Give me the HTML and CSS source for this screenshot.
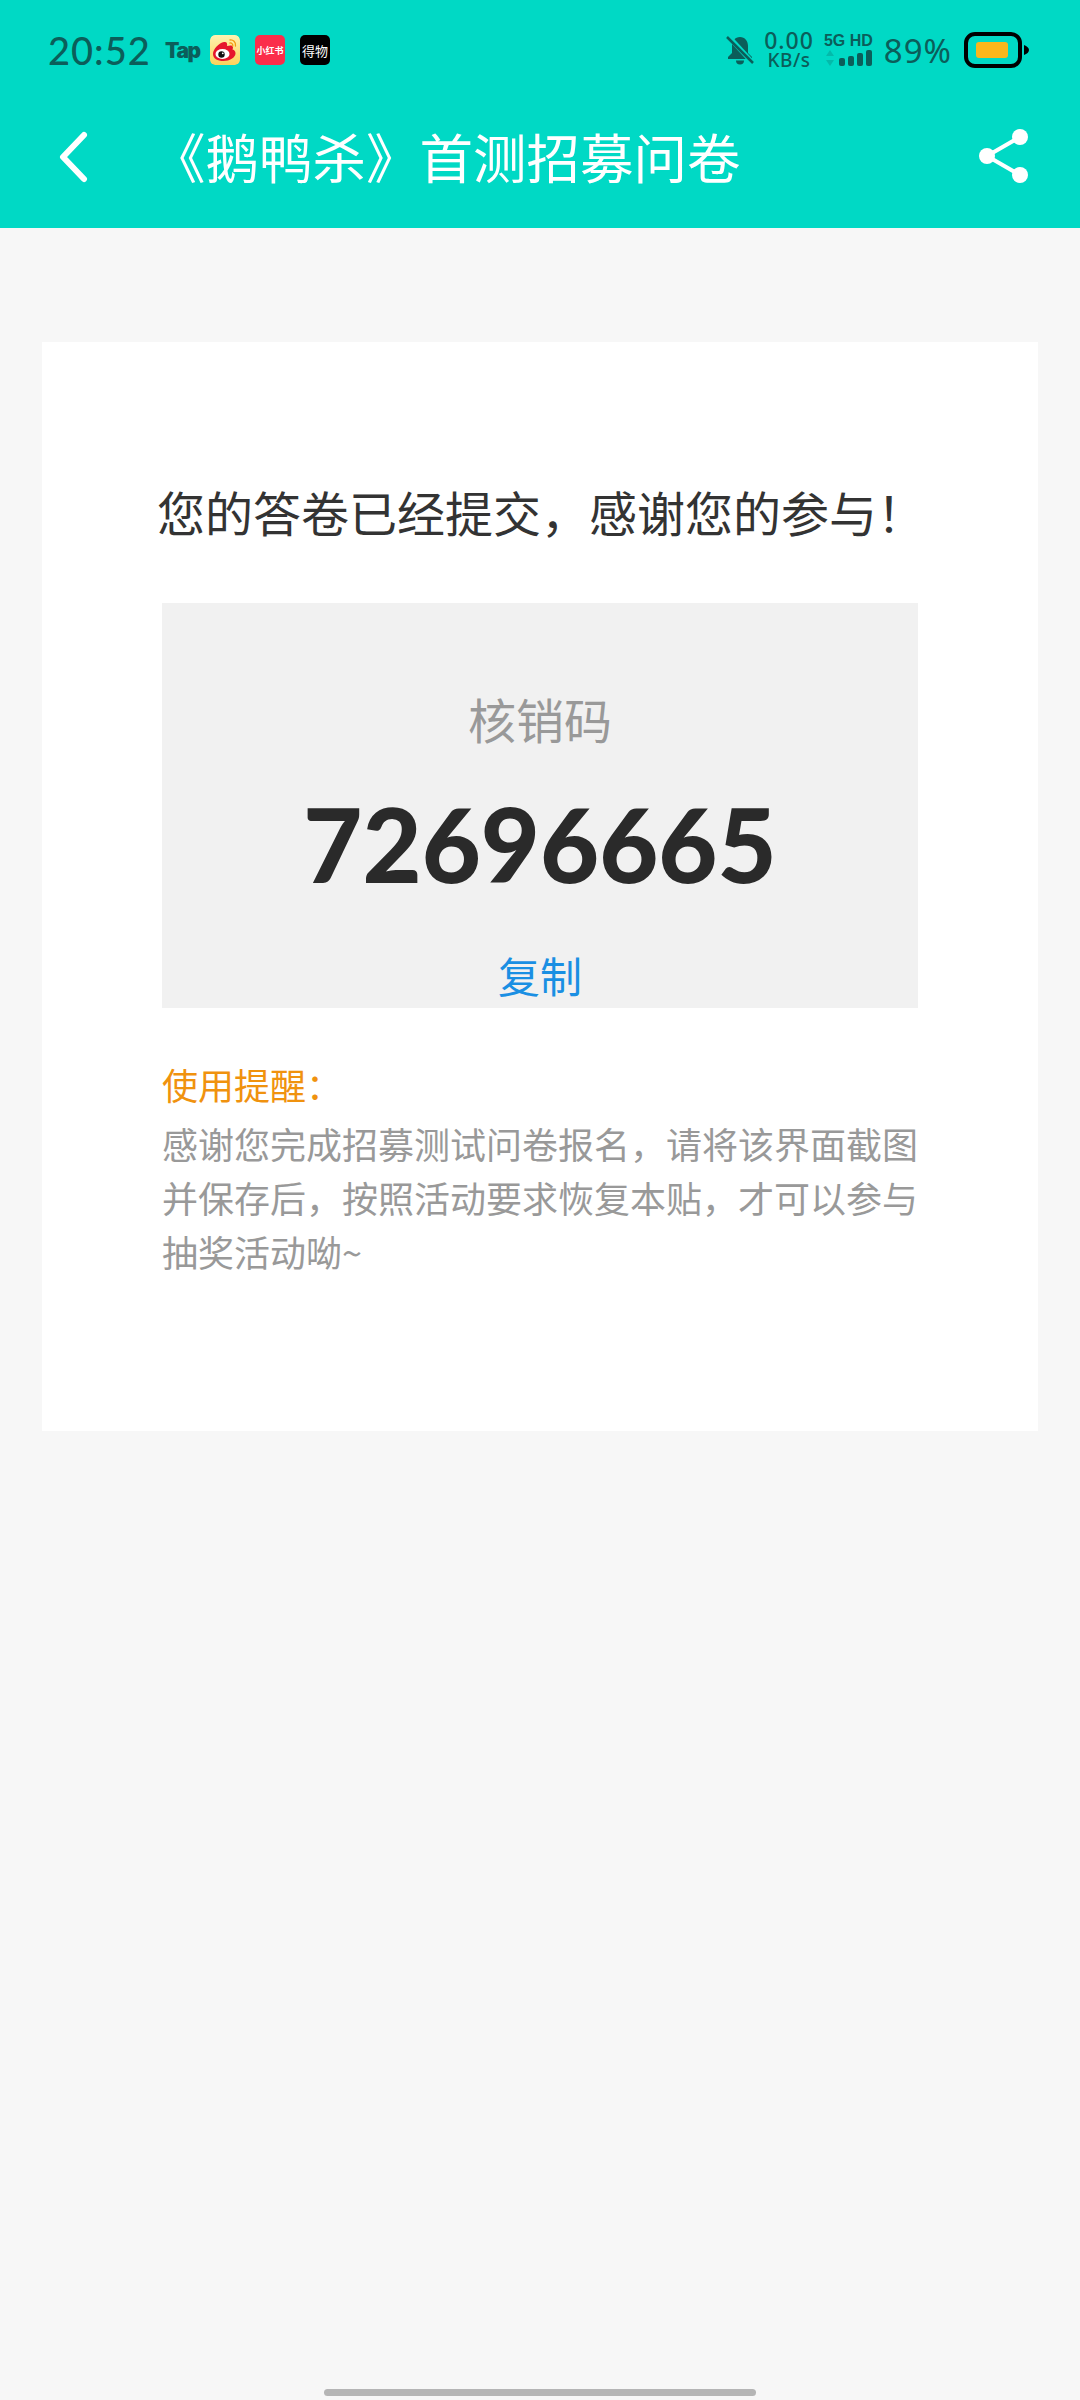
FILE: index.html

```html
<!DOCTYPE html>
<html lang="zh-CN">
<head>
  <meta charset="UTF-8" />
  <meta name="viewport" content="width=device-width, initial-scale=1.0"/>
  <title>《鹅鸭杀》首测招募问卷</title>
  <link rel="stylesheet" href="styles.css">
</head>
<body>
  <header class="top">
    <div class="status-bar">
      <div class="status-left">
        <span class="time">20:52</span>
        <span class="tap">Tap</span>
        <span class="app-icon weibo">
          <svg width="30" height="30" viewBox="0 0 30 30">
            <defs>
              <linearGradient id="wb" x1="0" y1="0" x2="0" y2="1">
                <stop offset="0" stop-color="#fff3b0"/>
                <stop offset="1" stop-color="#fbd35c"/>
              </linearGradient>
            </defs>
            <rect width="30" height="30" rx="5" fill="url(#wb)"/>
            <path d="M3 19c0-5 6-11 11-12 3-.5 3.500 1.500 3 4 3-1 6-1 6 1.500 0 1-.5 1.500-.5 2 2 .5 3 2 3 4 0 4-6 7.500-12 7.500-6 0-10.500-2.500-10.500-7z" fill="#e6162d"/>
            <ellipse cx="12.500" cy="19" rx="7" ry="5" fill="#fff"/>
            <circle cx="11.500" cy="19.500" r="3.200" fill="#111"/>
            <circle cx="12.800" cy="18.300" r="0.900" fill="#fff"/>
            <path d="M20 5c3-.5 6 2 5.500 6M20 8c1.500-.3 3 1 2.800 3" fill="none" stroke="#f39c12" stroke-width="1.300" stroke-linecap="round"/>
          </svg>
        </span>
        <span class="app-icon xhs">小红书</span>
        <span class="app-icon dewu">得物</span>
      </div>
      <div class="status-right">
        <svg class="bell" width="28" height="32" viewBox="0 0 28 32">
          <path d="M14 3c-5 0-8 4-8 9v7l-4 4v2h24v-2l-4-4v-7c0-5-3-9-8-9z" fill="#0b5e5a"/>
          <path d="M10 26.500a4 4 0 0 0 8 0z" fill="#0b5e5a"/>
          <path d="M2 2l24 26" stroke="#00d9c5" stroke-width="5"/>
          <path d="M1 3l26 26" stroke="#0b5e5a" stroke-width="2.500"/>
        </svg>
        <div class="speed"><span>0.00</span><span class="unit">KB/s</span></div>
        <div class="signal">
          <span class="net">5G HD</span>
          <svg width="48" height="18" viewBox="0 0 48 18">
            <path d="M5 1l4 6H1zM5 17l4-6H1z" fill="#0b5e5a" opacity="0.25"/>
            <rect x="14" y="9" width="6" height="8" rx="2" fill="#0b5e5a"/>
            <rect x="23" y="7" width="6" height="10" rx="2" fill="#0b5e5a"/>
            <rect x="32" y="4" width="6" height="13" rx="2" fill="#0b5e5a"/>
            <rect x="41" y="1" width="6" height="16" rx="2" fill="#0b5e5a"/>
          </svg>
        </div>
        <span class="percent">89%</span>
        <svg class="battery" width="66" height="36" viewBox="0 0 66 36">
          <rect x="2" y="2" width="54" height="32" rx="9" fill="none" stroke="#000" stroke-width="4"/>
          <rect x="12" y="10" width="32" height="16" rx="3" fill="#fbb71c"/>
          <path d="M60 13c3 1 5 3 5 5s-2 4-5 5z" fill="#000"/>
        </svg>
      </div>
    </div>
    <div class="nav-bar">
      <svg class="back" width="30" height="52" viewBox="0 0 30 52">
        <path d="M26 4L5 26l21 22" fill="none" stroke="#fff" stroke-width="6" stroke-linecap="round" stroke-linejoin="round"/>
      </svg>
      <h1 class="page-title">《鹅鸭杀》首测招募问卷</h1>
      <svg class="share" width="52" height="56" viewBox="0 0 52 56">
        <path d="M9 28L42 9M9 28l33 19" fill="none" stroke="#fff" stroke-width="4"/>
        <circle cx="42" cy="9" r="8" fill="#fff"/>
        <circle cx="9" cy="28" r="8" fill="#fff"/>
        <circle cx="42" cy="47" r="8" fill="#fff"/>
      </svg>
    </div>
  </header>

  <main class="card">
    <h2 class="done-msg">您的答卷已经提交，感谢您的参与！</h2>
    <section class="code-box">
      <div class="code-label">核销码</div>
      <div class="code-num">72696665</div>
      <a class="copy-link">复制</a>
    </section>
    <section class="notice">
      <div class="notice-title">使用提醒：</div>
      <p class="notice-text">感谢您完成招募测试问卷报名，请将该界面截图并保存后，按照活动要求恢复本贴，才可以参与抽奖活动呦~</p>
    </section>
  </main>

  <div class="home-bar"></div>
</body>
</html>
```

FILE: styles.css

```css
* {
  box-sizing: border-box;
}
body {
  margin: 0;
  height: 2400px;
  overflow: hidden;
  position: relative;
  background: #f7f7f7;
  font-family: "Noto Sans CJK SC", "Noto Sans", sans-serif;
}
.top {
  height: 228px;
  background: #00d9c5;
}
.status-bar {
  height: 100px;
  padding: 0 50px 0 48px;
  display: flex;
  justify-content: space-between;
  align-items: center;
  color: #0b5e5a;
}
.status-left,
.status-right {
  display: flex;
  align-items: center;
}
.time {
  font-family: Lato, sans-serif;
  font-weight: 500;
  font-size: 38px;
  letter-spacing: 1px;
  width: 117px;
}
.tap {
  font-family: Inter, sans-serif;
  font-weight: 900;
  font-size: 21px;
  letter-spacing: -1.5px;
  width: 45px;
}
.app-icon {
  width: 30px;
  height: 30px;
  margin-right: 15px;
  border-radius: 5px;
  display: flex;
  align-items: center;
  justify-content: center;
  overflow: hidden;
  color: #fff;
  white-space: nowrap;
}
.xhs {
  background: #fb2d4b;
  font-size: 9px;
  font-weight: 700;
}
.dewu {
  background: #000;
  font-size: 13px;
}
.bell {
  margin-right: 10px;
}
.speed {
  display: flex;
  flex-direction: column;
  align-items: center;
  font-family: "Noto Sans", sans-serif;
  font-weight: 500;
  font-size: 23px;
  line-height: 21px;
  letter-spacing: 1px;
  margin-right: 10px;
}
.speed .unit {
  font-size: 19px;
  line-height: 19px;
  letter-spacing: 0.5px;
}
.signal {
  display: flex;
  flex-direction: column;
  align-items: flex-end;
  margin-right: 11px;
}
.net {
  font-family: "Liberation Sans", sans-serif;
  font-weight: 700;
  font-size: 16px;
  line-height: 16px;
}
.percent {
  font-family: "Noto Sans", sans-serif;
  font-size: 33px;
  letter-spacing: 1px;
  margin-right: 12px;
}
.nav-bar {
  height: 128px;
  padding: 0 50px 16px 58px;
  display: flex;
  align-items: center;
}
.back {
  margin-top: 2px;
}
.page-title {
  flex: 1;
  margin: 0 0 0 64px;
  font-size: 53.5px;
  font-weight: 400;
  line-height: 60px;
  color: #fff;
}
.card {
  margin: 114px 42px 0;
  height: 1089px;
  padding: 135px 120px 0;
  background: #fff;
}
.done-msg {
  margin: 0 0 0 -5px;
  font-size: 48px;
  font-weight: 400;
  line-height: 68px;
  white-space: nowrap;
  color: #333;
}
.code-box {
  height: 405px;
  margin-top: 58px;
  padding-top: 85px;
  background: #f1f1f1;
  text-align: center;
}
.code-label {
  font-size: 48px;
  font-weight: 400;
  line-height: 60px;
  color: #999;
}
.code-num {
  margin-top: 46px;
  font-family: Lato, sans-serif;
  font-weight: 900;
  font-size: 102px;
  line-height: 100px;
  color: #2a2a2a;
}
.copy-link {
  display: block;
  margin-top: 54px;
  font-size: 42px;
  font-weight: 400;
  line-height: 54px;
  color: #1a8fe3;
}
.notice {
  margin-top: 49px;
}
.notice-title {
  font-size: 36px;
  line-height: 54px;
  color: #f0920e;
}
.notice-text {
  margin: 5px 0 0;
  font-size: 36px;
  font-weight: 400;
  line-height: 54px;
  color: #999;
}
.home-bar {
  position: absolute;
  left: 324px;
  bottom: 4px;
  width: 432px;
  height: 7px;
  border-radius: 4px;
  background: #b5b5b5;
}
```
